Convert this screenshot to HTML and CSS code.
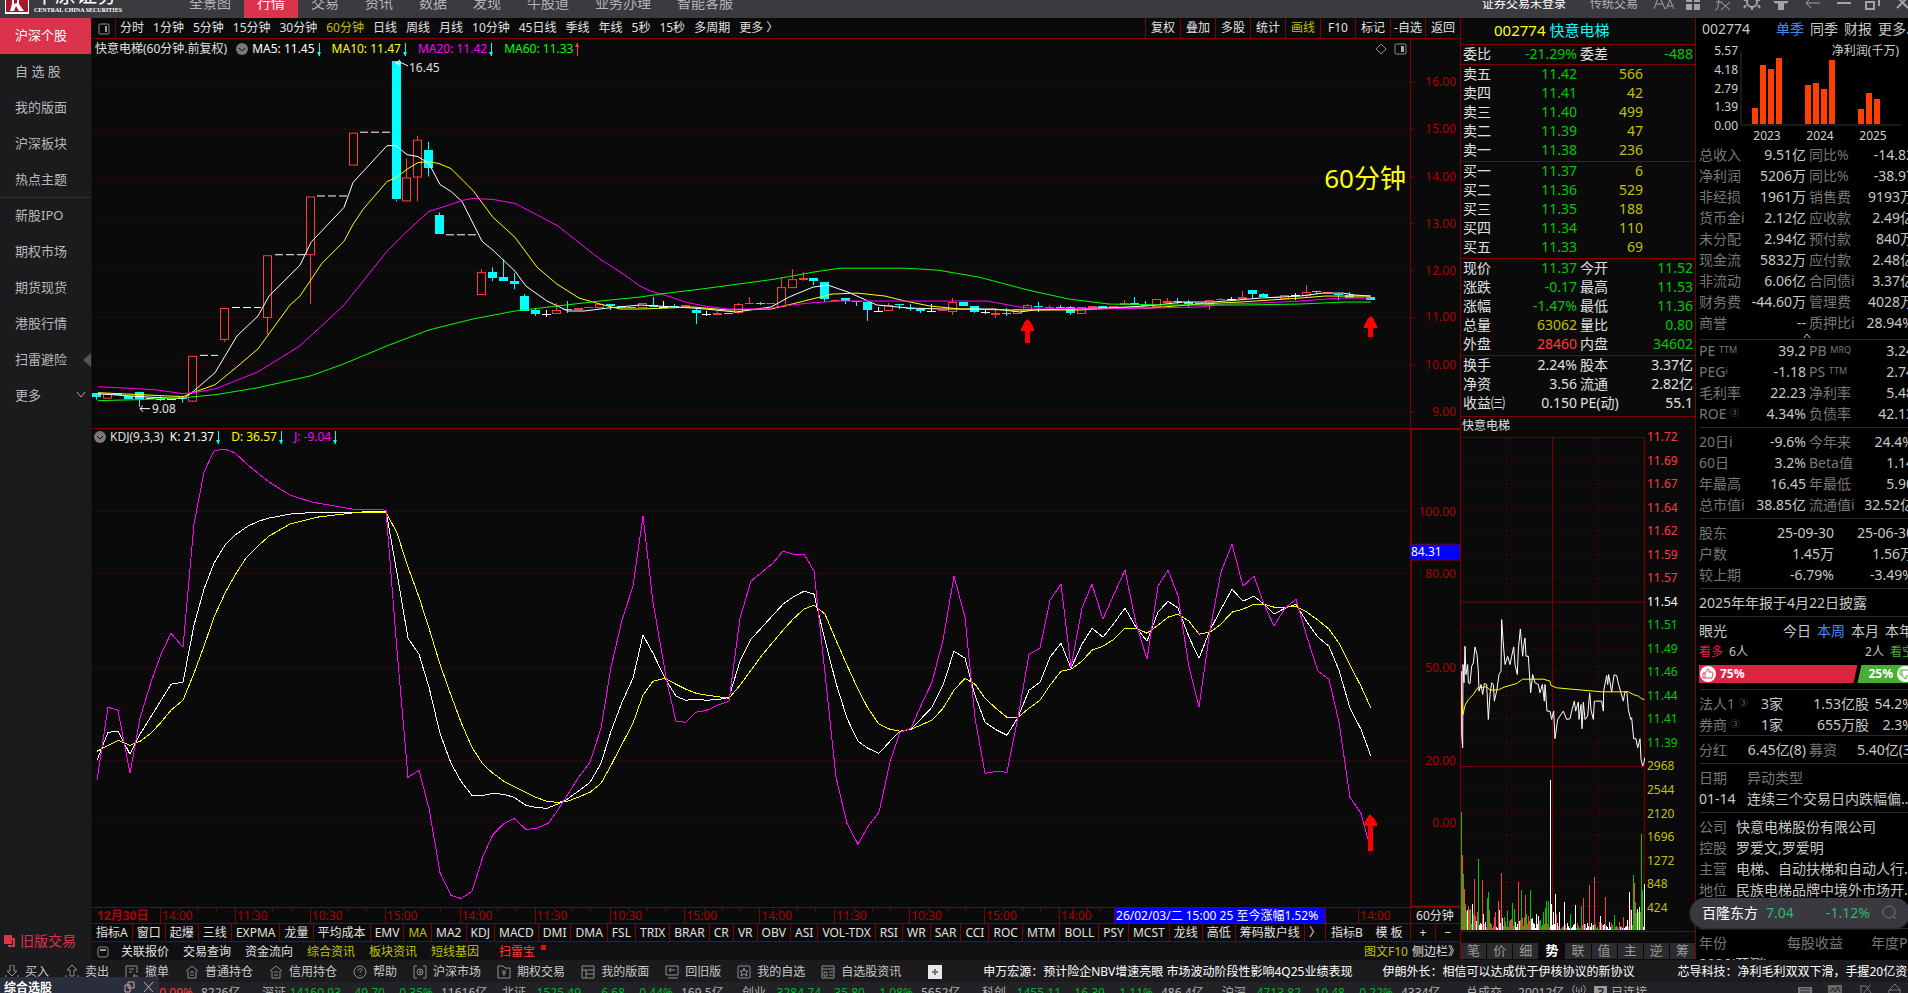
FILE: index.html
```html
<!DOCTYPE html>
<html lang="zh-CN">
<head>
  <meta charset="UTF-8">
  <meta name="viewport" content="width=device-width, initial-scale=1.0">
  <title>快意电梯 002774</title>
  <link rel="stylesheet" href="styles.css">
</head>
<body>
  <header class="topbar">
    <div class="logo">
      <svg width="24" height="14" viewBox="0 0 24 14"><rect width="24" height="14" fill="#fff"/><rect x="1" width="22" height="12" fill="#a5182c"/><path d="M7 0v4l-2 7h4l2-5 3 5h5l-5-7V0h-2v3L9 4V0z" fill="#fff"/></svg>
      <div class="logo-text">
        <b>中原证券</b>
        <small>CENTRAL CHINA SECURITIES</small>
      </div>
    </div>
    <nav class="topnav">
      <button>全景图</button>
      <button class="active">行情</button>
      <button>交易</button>
      <button>资讯</button>
      <button>数据</button>
      <button>发现</button>
      <button>牛股道</button>
      <button>业务办理</button>
      <button>智能客服</button>
    </nav>
    <div class="account">
      <button class="login">证券交易未登录</button>
      <button>传统交易</button>
      <svg class="window-icons" width="254" height="14" viewBox="0 0 254 14" fill="none" stroke="#a3a3a8" stroke-width="2">
        <path d="M0 9L5-5l6 14M2 4h7M12 9l4-9 4 9M13 6h5" stroke-width="1"/>
        <path d="M32 0h6v2h-6zM40 0h6v2h-6zM32 4h6v6h-6zM40 4h6v6h-6z" fill="#a3a3a8" stroke="none"/>
        <path d="M61 10c3 0 3-4 4-10M62 2h6M67 2l9 8M76 2l-9 8" stroke-width="1"/>
        <circle cx="98" cy="2" r="5"/><path d="M98 7v3M92 5l-2 3M104 5l2 3M90 0h3M103 0h3"/>
        <path d="M119 1h16l-3 3-2-1v7h-6V3l-2 1z" fill="#a3a3a8" stroke="none"/>
        <path d="M166 3h-14M157-2l-5 5 5 5" stroke-width="1"/>
        <path d="M183 3h14"/>
        <path d="M217-2h8v8M212 2h8v7h-8z"/>
        <path d="M243 8l11-11M254 8L243-3"/>
      </svg>
    </div>
  </header>

  <main>
    <aside class="sidebar">
      <button class="active">沪深个股</button>
      <button>自 选 股</button>
      <button>我的版面</button>
      <button>沪深板块</button>
      <button class="group-end">热点主题</button>
      <button>新股IPO</button>
      <button>期权市场</button>
      <button>期货现货</button>
      <button>港股行情</button>
      <button class="fold">扫雷避险</button>
      <button class="more">更多 <svg width="10" height="6" viewBox="0 0 10 6"><path d="M1 0l4 5 4-5" fill="none" stroke="#aaa"/></svg></button>
      <button class="old-trade"><svg width="11" height="12" viewBox="0 0 11 12"><path d="M0 0h8v9H0z" fill="#dc334c"/><path d="M5 4h5v7H4" fill="none" stroke="#dc334c" stroke-width="2"/></svg>旧版交易</button>
    </aside>

    <section class="workspace">
      <div class="periods">
        <button class="layout-btn"><svg width="12" height="12" viewBox="0 0 12 12"><rect x="1" y="1" width="10" height="10" rx="1" fill="none" stroke="#888"/><path d="M7 3h2v6H7z" fill="#999"/></svg></button>
        <div class="period-list">
          <button>分时</button><button>1分钟</button><button>5分钟</button><button>15分钟</button><button>30分钟</button><button class="on">60分钟</button><button>日线</button><button>周线</button><button>月线</button><button>10分钟</button><button>45日线</button><button>季线</button><button>年线</button><button>5秒</button><button>15秒</button><button>多周期</button><button>更多 〉</button>
        </div>
        <div class="tools">
          <button>复权</button><button>叠加</button><button>多股</button><button>统计</button><button class="on">画线</button><button>F10</button><button>标记</button><button>-自选</button><button>返回</button>
        </div>
      </div>

      <div class="panel price-panel">
        <div class="plot">
          <div class="legend">
            <span>快意电梯(60分钟.前复权)</span>
            <svg class="dot" width="12" height="12" viewBox="0 0 12 12"><circle cx="6" cy="6" r="6" fill="#777"/><path d="M3 5l3 3 3-3" fill="none" stroke="#111"/></svg>
            <span class="white">MA5: 11.45<i class="down"></i></span>
            <span class="yellow">MA10: 11.47<i class="down"></i></span>
            <span class="magenta">MA20: 11.42<i class="down"></i></span>
            <span class="green">MA60: 11.33<i class="up"></i></span>
            <svg class="legend-tools" width="32" height="12" viewBox="0 0 32 12" fill="none" stroke="#888"><path d="M6 1l5 5-5 5-5-5z"/><rect x="20" y="1" width="11" height="10" rx="1"/><path d="M26 3h3v6h-3z" fill="#aaa" stroke="none"/></svg>
          </div>
          <svg id="priceChart" class="chart" viewBox="92 59 1318 370" preserveAspectRatio="none"></svg>
          <div class="note">60分钟</div>
        </div>
        <svg id="priceAxis" class="axis" viewBox="0 39 50 390" preserveAspectRatio="none"></svg>
      </div>

      <div class="panel kdj-panel">
        <div class="plot">
          <div class="legend">
            <svg class="dot" width="12" height="12" viewBox="0 0 12 12"><circle cx="6" cy="6" r="6" fill="#777"/><path d="M3 5l3 3 3-3" fill="none" stroke="#111"/></svg>
            <span>KDJ(9,3,3)</span>
            <span class="white">K: 21.37<i class="down"></i></span>
            <span class="yellow">D: 36.57<i class="down"></i></span>
            <span class="magenta">J: -9.04<i class="down"></i></span>
          </div>
          <svg id="kdjChart" class="chart" viewBox="92 447 1318 460" preserveAspectRatio="none"></svg>
        </div>
        <svg id="kdjAxis" class="axis" viewBox="0 429 50 478" preserveAspectRatio="none"></svg>
      </div>

      <div class="timeline">
        <span class="date">12月30日</span>
        <span>14:00</span><span>11:30</span><span>10:30</span><span>15:00</span><span>14:00</span><span>11:30</span><span>10:30</span><span>15:00</span><span>14:00</span><span>11:30</span><span>10:30</span><span>15:00</span><span>14:00</span>
        <span class="cursor-info">26/02/03/二 15:00 25 至今涨幅1.52%</span>
        <span class="tail">14:00</span>
        <span class="period-name">60分钟</span>
      </div>

      <div class="indicators">
        <div class="indicator-list">
          <button>指标A</button><button>窗口</button><button>起爆</button><button>三线</button><button>EXPMA</button><button>龙量</button><button>平均成本</button><button>EMV</button><button class="on">MA</button><button>MA2</button><button>KDJ</button><button>MACD</button><button>DMI</button><button>DMA</button><button>FSL</button><button>TRIX</button><button>BRAR</button><button>CR</button><button>VR</button><button>OBV</button><button>ASI</button><button>VOL-TDX</button><button>RSI</button><button>WR</button><button>SAR</button><button>CCI</button><button>ROC</button><button>MTM</button><button>BOLL</button><button>PSY</button><button>MCST</button><button>龙线</button><button>高低</button><button>筹码散户线</button><button>〉</button>
        </div>
        <button class="wide">指标B</button><button class="wide">模 板</button><button class="zoom">+</button><button class="zoom">−</button>
      </div>

      <div class="links">
        <svg width="12" height="12" viewBox="0 0 12 12"><rect x="1" y="1" width="10" height="10" rx="2" fill="none" stroke="#888"/><path d="M3 3h6v2H3z" fill="#999"/></svg>
        <a href="#">关联报价</a><a href="#">交易查询</a><a href="#">资金流向</a>
        <a href="#" class="olive">综合资讯</a><a href="#" class="olive">板块资讯</a><a href="#" class="olive">短线基因</a>
        <a href="#" class="alert">扫雷宝</a>
        <a href="#" class="olive right">图文F10</a><a href="#" class="side-toggle">侧边栏》</a>
      </div>
    </section>

    <section class="quote">
      <h2><span class="yellow">002774</span> <span class="cyan">快意电梯</span></h2>
      <table>
        <tr><th>委比</th><td class="g">-21.29%</td><th>委差</th><td class="g">-488</td></tr>
      </table>
      <table class="book">
        <tr><th>卖五</th><td class="g">11.42</td><td class="o">566</td><td></td></tr>
        <tr><th>卖四</th><td class="g">11.41</td><td class="o">42</td><td></td></tr>
        <tr><th>卖三</th><td class="g">11.40</td><td class="o">499</td><td></td></tr>
        <tr><th>卖二</th><td class="g">11.39</td><td class="o">47</td><td></td></tr>
        <tr><th>卖一</th><td class="g">11.38</td><td class="o">236</td><td></td></tr>
      </table>
      <table class="book">
        <tr><th>买一</th><td class="g">11.37</td><td class="o">6</td><td></td></tr>
        <tr><th>买二</th><td class="g">11.36</td><td class="o">529</td><td></td></tr>
        <tr><th>买三</th><td class="g">11.35</td><td class="o">188</td><td></td></tr>
        <tr><th>买四</th><td class="g">11.34</td><td class="o">110</td><td></td></tr>
        <tr><th>买五</th><td class="g">11.33</td><td class="o">69</td><td></td></tr>
      </table>
      <table>
        <tr><th>现价</th><td class="g">11.37</td><th>今开</th><td class="g">11.52</td></tr>
        <tr><th>涨跌</th><td class="g">-0.17</td><th>最高</th><td class="g">11.53</td></tr>
        <tr><th>涨幅</th><td class="g">-1.47%</td><th>最低</th><td class="g">11.36</td></tr>
        <tr><th>总量</th><td class="o">63062</td><th>量比</th><td class="g">0.80</td></tr>
        <tr><th>外盘</th><td class="r">28460</td><th>内盘</th><td class="g">34602</td></tr>
      </table>
      <table class="basics">
        <tr><th>换手</th><td>2.24%</td><th>股本</th><td>3.37亿</td></tr>
        <tr><th>净资</th><td>3.56</td><th>流通</th><td>2.82亿</td></tr>
        <tr><th>收益㈢</th><td>0.150</td><th>PE(动)</th><td>55.1</td></tr>
      </table>
      <h3>快意电梯</h3>
      <div class="intraday">
        <svg id="intraday" class="chart" viewBox="0 0 552 1485" preserveAspectRatio="none"></svg>
        <ol class="scale">
          <li class="r">11.72</li><li class="r">11.69</li><li class="r">11.67</li><li class="r">11.64</li><li class="r">11.62</li><li class="r">11.59</li><li class="r">11.57</li><li class="w">11.54</li><li class="g">11.51</li><li class="g">11.49</li><li class="g">11.46</li><li class="g">11.44</li><li class="g">11.41</li><li class="g">11.39</li><li class="o">2968</li><li class="o">2544</li><li class="o">2120</li><li class="o">1696</li><li class="o">1272</li><li class="o">848</li><li class="o">424</li>
        </ol>
      </div>
      <div class="quote-tabs">
        <button>笔</button><button>价</button><button>细</button><button class="on">势</button><button>联</button><button>值</button><button>主</button><button>逆</button><button>筹</button>
      </div>
    </section>

    <section class="info">
      <div class="info-body">
        <div class="info-head"><span>002774</span><a href="#" class="blue">单季</a><a href="#">同季</a><a href="#">财报</a><a href="#">更多..</a></div>
        <svg class="profit" width="216" height="104" viewBox="1699 40 216 104">
          <path d="M1741 51v74h160" fill="none" stroke="#333"/>
          <path fill="#ff4000" d="M1752 108h6v16h-6zM1760 65h6v59h-6zM1768 69h6v55h-6zM1776 58h6v66h-6zM1805 85h6v39h-6zM1813 83h6v41h-6zM1821 89h6v35h-6zM1829 60h6v64h-6zM1858 109h6v15h-6zM1866 93h6v31h-6zM1874 99h6v25h-6z"/>
          <g text-anchor="end"><text x="1738" y="55">5.57</text><text x="1738" y="74">4.18</text><text x="1738" y="93">2.79</text><text x="1738" y="111">1.39</text><text x="1738" y="130">0.00</text><text x="1899" y="55">净利润(千万)</text></g>
          <g text-anchor="middle"><text x="1767" y="140">2023</text><text x="1820" y="140">2024</text><text x="1873" y="140">2025</text></g>
        </svg>
        <table class="first">
          <tr><th>总收入</th><td>9.51亿</td><th>同比%</th><td>-14.82</td></tr>
          <tr><th>净利润</th><td>5206万</td><th>同比%</th><td>-38.97</td></tr>
          <tr><th>非经损</th><td>1961万</td><th>销售费</th><td>9193万</td></tr>
          <tr><th>货币金i</th><td>2.12亿</td><th>应收款</th><td>2.49亿</td></tr>
          <tr><th>未分配</th><td>2.94亿</td><th>预付款</th><td>840万</td></tr>
          <tr><th>现金流</th><td>5832万</td><th>应付款</th><td>2.48亿</td></tr>
          <tr><th>非流动</th><td>6.06亿</td><th>合同债i</th><td>3.37亿</td></tr>
          <tr><th>财务费</th><td>-44.60万</td><th>管理费</th><td>4028万</td></tr>
          <tr><th>商誉</th><td>--</td><th>质押比i</th><td>28.94%</td></tr>
        </table>
        <div class="fold-up"><svg width="8" height="6" viewBox="0 0 8 6"><path d="M1 5l3-4 3 4" fill="none" stroke="#ccc"/></svg></div>
        <table class="tight">
          <tr><th>PE <sup>TTM</sup></th><td>39.2</td><th>PB <sup>MRQ</sup></th><td>3.24</td></tr>
          <tr><th>PEG<sup>i</sup></th><td>-1.18</td><th>PS <sup>TTM</sup></th><td>2.74</td></tr>
          <tr><th>毛利率</th><td>22.23</td><th>净利率</th><td>5.48</td></tr>
          <tr><th>ROE <sup>③</sup></th><td>4.34%</td><th>负债率</th><td>42.13</td></tr>
        </table>
        <table>
          <tr><th>20日i</th><td>-9.6%</td><th>今年来</th><td>24.4%</td></tr>
          <tr><th>60日</th><td>3.2%</td><th>Beta值</th><td>1.14</td></tr>
          <tr><th>年最高</th><td>16.45</td><th>年最低</th><td>5.90</td></tr>
          <tr><th>总市值i</th><td>38.85亿</td><th>流通值i</th><td>32.52亿</td></tr>
        </table>
        <table class="holders">
          <tr><th>股东</th><td>25-09-30</td><td>25-06-30</td></tr>
          <tr><th>户数</th><td>1.45万</td><td>1.56万</td></tr>
          <tr><th>较上期</th><td>-6.79%</td><td>-3.49%</td></tr>
        </table>
        <p>2025年年报于4月22日披露</p>
        <div class="votes">
          <div class="vote-head"><span>眼光</span><a href="#">今日</a><a href="#" class="blue">本周</a><a href="#">本月</a><a href="#">本年</a></div>
          <div class="vote-count"><b class="bull">看多</b><span>6人</span><span class="push">2人</span><b class="bear">看空</b></div>
          <div class="vote-bar">
            <div class="bull-part"><svg width="18" height="18" viewBox="0 0 18 18"><circle cx="9" cy="9" r="8" fill="#fff"/><path d="M4 8h2v5H4zM6 8l3-4c2 0 1 2 1 3h3c1 0 1 1 0 6H6" fill="none" stroke="#e0475a"/></svg>75%</div>
            <div class="bear-part">25%<svg width="18" height="18" viewBox="0 0 18 18"><circle cx="9" cy="9" r="8" fill="#fff"/><path d="M4 10h2V5H4zM6 10l3 4c2 0 1-2 1-3h3c1 0 1-1 0-6H6" fill="none" stroke="#4aae36"/></svg></div>
          </div>
        </div>
        <table class="funds">
          <tr><th>法人1 <sup>③</sup></th><td>3家</td><td>1.53亿股</td><td>54.2%</td></tr>
          <tr><th>券商 <sup>③</sup></th><td>1家</td><td>655万股</td><td>2.3%</td></tr>
        </table>
        <table>
          <tr><th>分红</th><td>6.45亿(8)</td><th>募资</th><td>5.40亿(3)</td></tr>
        </table>
        <table class="left events">
          <tr><th>日期</th><th>异动类型</th></tr>
          <tr><td>01-14</td><td>连续三个交易日内跌幅偏...</td></tr>
        </table>
        <table class="left company">
          <tr><th>公司</th><td>快意电梯股份有限公司</td></tr>
          <tr><th>控股</th><td>罗爱文,罗爱明</td></tr>
          <tr><th>主营</th><td>电梯、自动扶梯和自动人行...</td></tr>
          <tr><th>地位</th><td>民族电梯品牌中境外市场开...</td></tr>
        </table>
        <table class="forecast">
          <tr><th>年份</th><th>每股收益</th><th>年度PE</th></tr>
          <tr><td>2026(预测)</td><td></td><td></td></tr>
        </table>
      </div>
    </section>

    <div class="float-quote">
      <span>百隆东方</span><span class="fall">7.04</span><span class="fall pct">-1.12%</span>
      <svg width="16" height="16" viewBox="0 0 16 16" fill="none" stroke="#777"><circle cx="7" cy="7" r="6"/><path d="M11 11l3 3"/></svg>
    </div>
  </main>

  <div class="shortcuts">
    <button><svg viewBox="0 0 14 14"><path d="M5 0v6H2l5 5 5-5H9V0zM1 10v3h3M13 10v3h-3"/></svg>买入</button>
    <button><svg viewBox="0 0 14 14"><path d="M5 11V5H2l5-5 5 5H9v6zM1 10v3h3M13 10v3h-3"/></svg>卖出</button>
    <button><svg viewBox="0 0 14 14"><path d="M7 13H1V1h11v7M4 4h5M4 7h3M13 11H8M10 9l-2 2 2 2"/></svg>撤单</button>
    <button><svg viewBox="0 0 14 14"><path d="M1 6l6-5 6 5M3 6v7h8V6M5 7h4M5 10h4"/></svg>普通持仓</button>
    <button><svg viewBox="0 0 14 14"><path d="M1 6l6-5 6 5M3 6v7h8V6M5 7h4M5 10h4"/></svg>信用持仓</button>
    <button><svg viewBox="0 0 14 14"><circle cx="7" cy="7" r="6"/><path d="M5 6c0-3 4-3 4-1 0 1-2 1-2 3M7 10v1"/></svg>帮助</button>
    <button><svg viewBox="0 0 14 14"><path d="M4 1H1v12h3M10 1h3v12h-3"/><circle cx="7" cy="7" r="3"/><path d="M6 6h2v2H6"/></svg>沪深市场</button>
    <button><svg viewBox="0 0 14 14"><path d="M1 1h5l2 2h5v10H1zM5 5l2 2 2-2M7 7v4M5 8h4"/></svg>期权交易</button>
    <button><svg viewBox="0 0 14 14"><path d="M1 1h12v12H1zM1 5h12M5 5v8M5 9h8"/></svg>我的版面</button>
    <button><svg viewBox="0 0 14 14"><path d="M1 1h12v9H1zM3 13h10M10 5H4M6 3L4 5l2 2"/></svg>回旧版</button>
    <button><svg viewBox="0 0 14 14"><rect x="1" y="1" width="12" height="12" rx="1"/><path d="M7 3l1 3h3L9 8l1 3-3-2-3 2 1-3-2-2h3z"/></svg>我的自选</button>
    <button><svg viewBox="0 0 14 14"><path d="M1 1h12v12H1zM1 4h12M3 7h3v4H3zM8 7h4M8 10h4"/></svg>自选股资讯</button>
    <button class="add"><svg viewBox="0 0 14 14"><path d="M0 0h14v14H0z" fill="#e8e8e8" stroke="none"/><path d="M7 4v6M4 7h6" stroke="#777" stroke-width="2"/></svg></button>
    <div class="news">
      <a href="#">申万宏源：预计险企NBV增速亮眼 市场波动阶段性影响4Q25业绩表现</a>
      <a href="#">伊朗外长：相信可以达成优于伊核协议的新协议</a>
      <a href="#">芯导科技：净利毛利双双下滑，手握20亿资金</a>
    </div>
  </div>

  <footer class="status">
    <div class="index"><span>上证</span><b>4134.51</b><b class="r">3.70</b><b class="r">0.09%</b><span>8226亿</span></div>
    <div class="index"><span>深证</span><b>14160.93</b><b>49.70</b><b>0.35%</b><span>11616亿</span></div>
    <div class="index"><span>北证</span><b>1525.49</b><b>6.68</b><b>0.44%</b><span>169.5亿</span></div>
    <div class="index"><span>创业</span><b>3284.74</b><b>35.80</b><b>1.08%</b><span>5652亿</span></div>
    <div class="index"><span>科创</span><b>1455.11</b><b>16.39</b><b>1.11%</b><span>486.4亿</span></div>
    <div class="index"><span>沪深</span><b>4713.82</b><b>10.48</b><b>0.22%</b><span>4334亿</span></div>
    <div class="total"><span>总成交</span><span>20012亿</span>
      <svg width="14" height="10" viewBox="0 0 14 10" fill="none" stroke="#aaa"><path d="M3 0c-3 3-3 6 0 9M11 0c3 3 3 6 0 9M5 2c-1 2-1 4 0 5M9 2c1 2 1 4 0 5M7 4v6"/></svg>
      <em>3</em><span>已连接</span></div>
    <svg class="tray" width="104" height="10" viewBox="0 0 104 10" fill="none" stroke="#777"><path d="M0 3h14v7H0z" fill="#777" stroke="none"/><path d="M2 5h10M2 8h10" stroke="#222"/><path d="M30 1h14v9H30z" fill="#666" stroke="none"/><path d="M32 8l3-4 2 4 3-5 2 5" stroke="#222"/><path d="M62 2h6l5 7M72 1l-7 9M63 2v8"/><path d="M97 0l5 6v4M97 0l-6 6v4M91 6h12"/></svg>
    <div class="dock"><span>综合选股</span>
      <svg width="30" height="12" viewBox="0 0 30 12" fill="none" stroke="#d0a8a8"><path d="M4 1h6v6H4zM1 4h5v7H1zM20 1l9 10M29 1l-9 10"/></svg></div>
  </footer>

  <script src="charts.js"></script>
</body>
</html>
```
FILE: styles.css
```css
* {
  box-sizing: border-box;
}
body {
  margin: 0;
  height: 100vh;
  overflow: hidden;
  display: flex;
  flex-direction: column;
  background: #0a0a0a;
  color: #e0e0e0;
  font: 12px/18px "Noto Sans", "Noto Sans CJK SC", sans-serif;
  white-space: nowrap;
}
button {
  border: 0;
  padding: 0;
  background: none;
  color: inherit;
  font: inherit;
  white-space: nowrap;
  cursor: pointer;
}
a {
  color: inherit;
  text-decoration: none;
}
table {
  width: 100%;
  border-collapse: collapse;
  table-layout: fixed;
}
th, td {
  padding: 0;
  font-weight: normal;
  text-align: right;
}
th {
  text-align: left;
}
svg {
  flex: none;
}
.white, .w { color: #fff; }
.yellow { color: #ffff00; }
.magenta { color: #ff00ff; }
.green { color: #00ff00; }
.cyan { color: #00ffff; }
.blue { color: #3c8cff; }
.g { color: #00c800; }
.r { color: #ff3c3c; }
.o, .on, .olive { color: #c0c000; }

/* top bar */
.topbar {
  display: flex;
  flex: none;
  height: 18px;
  overflow: hidden;
  background: #3b3a3f;
  font-size: 14px;
  line-height: 6px;
  color: #b4b4b8;
}
.logo {
  display: flex;
  width: 176px;
  padding-left: 5px;
}
.logo-text {
  padding-left: 5px;
  color: #fff;
}
.logo-text b {
  display: block;
  height: 12px;
  margin-top: -6px;
  line-height: 0;
  font-size: 21px;
  font-weight: normal;
}
.logo-text small {
  display: block;
  font: bold 6px/8px "Liberation Serif", serif;
}
.topnav {
  display: flex;
}
.topnav button {
  padding: 0 13px 12px;
}
.topnav .active {
  background: #dc334c;
  color: #fff;
}
.account {
  display: flex;
  gap: 24px;
  margin-left: auto;
  font-size: 12px;
}
.account button {
  padding-bottom: 11px;
}
.account .login {
  color: #fff;
}
.window-icons {
  margin-left: -8px;
}

main {
  position: relative;
  display: flex;
  flex: 1;
  min-height: 0;
}

/* left menu */
.sidebar {
  display: flex;
  flex: 0 0 92px;
  flex-direction: column;
  background: #1b1b1e;
  border-right: 1px solid #141416;
  font-size: 13px;
  color: #b8b8b8;
}
.sidebar button {
  height: 36px;
  padding: 0 0 2px 15px;
  text-align: left;
}
.sidebar .active {
  background: #dc334c;
  color: #fff;
}
.sidebar .group-end {
  border-bottom: 1px solid #333336;
}
.sidebar .fold {
  position: relative;
}
.sidebar .fold::after {
  content: "";
  position: absolute;
  right: 0;
  top: 11px;
  border: 7px solid transparent;
  border-left: 0;
  border-right: 8px solid #55555a;
}
.sidebar .more {
  display: flex;
  align-items: center;
  justify-content: space-between;
  padding-right: 5px;
}
.sidebar .old-trade {
  display: flex;
  align-items: center;
  gap: 5px;
  margin-top: auto;
  padding-left: 4px;
  font-size: 14px;
  color: #dc334c;
}

/* chart workspace */
.workspace {
  display: flex;
  flex: 1;
  flex-direction: column;
  min-width: 0;
}
.periods {
  display: flex;
  flex: none;
  height: 21px;
  border-bottom: 1px solid #800000;
}
.layout-btn {
  width: 24px;
  border-right: 1px solid #800000;
}
.layout-btn svg {
  vertical-align: middle;
}
.period-list {
  display: flex;
  gap: 9px;
  padding-left: 4px;
}
.tools {
  display: flex;
  margin-left: auto;
}
.tools button {
  width: 35px;
  border-left: 1px solid #800000;
}
.panel {
  display: flex;
  min-height: 0;
}
.price-panel {
  flex: 389;
  border-bottom: 1px solid #800000;
}
.kdj-panel {
  flex: 479;
}
.plot {
  position: relative;
  display: flex;
  flex: 1;
  flex-direction: column;
  min-width: 0;
}
.plot > svg {
  flex: 1;
  width: 100%;
  min-height: 0;
}
.chart {
  shape-rendering: crispEdges;
}
.axis {
  width: 50px;
  height: 100%;
  font-size: 12px;
}
.legend {
  display: flex;
  align-items: center;
  gap: 10px;
  height: 20px;
  padding: 0 0 1px 3px;
}
.legend .dot {
  margin: 0 -6px 0 -1px;
}
.kdj-panel .legend {
  height: 18px;
  padding-bottom: 2px;
  gap: 6px;
}
.kdj-panel .legend .dot {
  margin-right: -2px;
}
.kdj-panel .legend span + span + span {
  margin-left: 4px;
}
.legend i {
  position: relative;
  display: inline-block;
  width: 1px;
  height: 13px;
  margin: 0 2px 0 4px;
  background: #00ffff;
  vertical-align: middle;
}
.legend i::after {
  content: "";
  position: absolute;
  left: -2px;
  bottom: 0;
  border: 2px solid transparent;
  border-top: 4px solid #00ffff;
  border-bottom: 0;
}
.legend .up {
  background: #ff3c3c;
}
.legend .up::after {
  top: 0;
  bottom: auto;
  border-top: 0;
  border-bottom: 4px solid #ff3c3c;
}
.legend-tools {
  margin: 0 3px 0 auto;
}
.note {
  position: absolute;
  right: 4px;
  top: 121px;
  font-size: 26px;
  line-height: 36px;
  color: #ffff00;
}
.timeline {
  display: flex;
  flex: none;
  height: 16px;
  border-top: 1px solid #800000;
  line-height: 15px;
  color: #b00000;
}
.timeline span {
  flex: 1;
  min-width: 0;
  padding-left: 1px;
  border-left: 1px solid #800000;
  background:
    linear-gradient(#800000, #800000) 25% 0 / 1px 3px no-repeat,
    linear-gradient(#800000, #800000) 50% 0 / 1px 3px no-repeat,
    linear-gradient(#800000, #800000) 75% 0 / 1px 3px no-repeat;
}
.timeline .date {
  flex: 0 0 68px;
  padding-left: 5px;
  border-left: 0;
  background: none;
  font-weight: bold;
}
.timeline span:nth-child(14) {
  flex: 0 0 55px;
}
.timeline .cursor-info {
  flex: 0 0 211px;
  padding-left: 1px;
  overflow: hidden;
  background: #0000ff;
  color: #fff;
}
.timeline .tail {
  flex: 0 0 85px;
  padding-left: 34px;
  background: linear-gradient(#800000, #800000) 32px 0 / 1px 15px no-repeat;
}
.timeline .period-name {
  flex: 0 0 50px;
  padding-left: 5px;
  background: none;
  color: #e0e0e0;
}
.indicators {
  display: flex;
  flex: none;
  height: 19px;
  border: solid #800000;
  border-width: 1px 0;
  line-height: 17px;
}
.indicator-list {
  display: flex;
  flex: 1;
  min-width: 0;
  overflow: hidden;
}
.indicator-list button {
  flex: 1 1 auto;
  border-right: 1px solid #800000;
}
.indicators .wide {
  width: 42px;
}
.indicators .zoom {
  width: 25px;
  border-left: 1px solid #800000;
}
.links {
  display: flex;
  flex: none;
  align-items: center;
  gap: 14px;
  height: 18px;
  padding: 1px 0 0 5px;
  background: #101012;
}
.links svg {
  margin-right: -2px;
}
.links .alert {
  position: relative;
  margin-left: 6px;
  color: #ff3c3c;
}
.links .alert::after {
  content: "";
  position: absolute;
  right: -11px;
  top: 2px;
  width: 5px;
  height: 5px;
  background: #ff0000;
}
.links .right {
  margin-left: auto;
}
.links .side-toggle {
  margin-left: -10px;
}

/* quote panel */
.quote {
  display: flex;
  flex: 0 0 236px;
  flex-direction: column;
  border: solid #800000;
  border-width: 0 1px;
}
.quote h2 {
  height: 26px;
  margin: 0;
  padding-left: 33px;
  font-size: 15px;
  font-weight: normal;
  line-height: 24px;
}
.quote table {
  display: block;
  flex: none;
  padding: 0 2px 1px;
  border-top: 1px solid #800000;
  font-size: 14px;
  line-height: 17px;
}
.quote h2 + table {
  padding-bottom: 0;
}
.quote .basics {
  padding-bottom: 3px;
}
.quote th, .quote td {
  height: 19px;
  padding-bottom: 2px;
}
.quote th:nth-child(1) { width: 50px; }
.quote td:nth-child(2) { width: 64px; }
.quote th:nth-child(3) { width: 58px; padding-left: 3px; }
.quote td:nth-child(3) { width: 66px; }
.quote td:nth-child(4) { width: 58px; }
.quote .book td:nth-child(4) { width: 50px; }
.quote h3 {
  height: 21px;
  margin: 0;
  padding-left: 1px;
  border-top: 1px solid #800000;
  font-size: 12px;
  font-weight: normal;
  line-height: 18px;
}
.intraday {
  display: flex;
  flex: 1;
  min-height: 0;
  border-bottom: 1px solid #800000;
}
.intraday svg {
  width: 184px;
  height: 100%;
}
.scale {
  display: flex;
  flex: 1;
  flex-direction: column;
  margin: -9px 0 0;
  padding: 0 0 9px 2px;
  list-style: none;
}
.scale li {
  flex: 1;
  min-height: 0;
}
.quote-tabs {
  display: flex;
  gap: 1px;
  height: 28px;
  padding: 11px 0 1px;
}
.quote-tabs button {
  flex: 1;
  padding-bottom: 2px;
  background: #2b2b2d;
  font-size: 13px;
  line-height: 14px;
  color: #999;
}
.quote-tabs .on {
  background: none;
  color: #fff;
  font-weight: bold;
}

/* company panel */
.info {
  flex: 0 0 212px;
  overflow: hidden;
  background: #000;
  font-size: 14px;
  line-height: 21px;
  color: #c8c8c8;
}
.info-body {
  margin: 0 -6px 0 3px;
}
.info-head {
  display: flex;
  gap: 6px;
  height: 22px;
  padding-left: 3px;
}
.info-head span {
  width: 68px;
}
.profit {
  display: block;
  font-size: 12px;
  fill: #d0d0d0;
}
.info table {
  border-top: 4px solid transparent;
  border-bottom: 3px solid transparent;
  background: linear-gradient(#2a2a2a, #2a2a2a) 0 0 / 100% 1px no-repeat border-box;
}
.info table.first {
  border: 0;
  background: none;
}
.info table.tight {
  border-top-width: 1px;
}
.info th, .info td {
  height: 21px;
  overflow: hidden;
}
.info th {
  color: #777;
}
.info th:nth-child(1) { width: 45px; }
.info td:nth-child(2) { width: 62px; }
.info th:nth-child(3) { width: 51px; padding-left: 3px; }
.info sup {
  font-size: 9px;
  line-height: 9px;
  vertical-align: 3px;
}
.fold-up {
  height: 6px;
  text-align: center;
  line-height: 6px;
}
.fold-up svg {
  display: block;
  margin: 0 auto;
}
.info .holders td:nth-child(2) { width: 90px; }
.info p {
  margin: 0;
  padding: 3px 0;
  border-top: 1px solid #2a2a2a;
}
.votes {
  height: 73px;
  padding-top: 3px;
  border-top: 1px solid #2a2a2a;
}
.vote-head {
  display: flex;
  gap: 6px;
}
.vote-head span {
  width: 78px;
}
.vote-count {
  display: flex;
  gap: 6px;
  font-size: 12px;
}
.vote-count b {
  font-weight: normal;
}
.vote-count .push {
  margin-left: auto;
}
.bull { color: #ee2244; }
.bear { color: #4aae36; }
.vote-bar {
  display: flex;
  height: 18px;
  margin-top: 3px;
  font-size: 12px;
  font-weight: bold;
  line-height: 18px;
  color: #fff;
}
.bull-part {
  display: flex;
  gap: 3px;
  flex: 1;
  background: #dc2440;
  clip-path: polygon(0 0, 100% 0, calc(100% - 4px) 100%, 0 100%);
}
.bear-part {
  display: flex;
  gap: 3px;
  flex: 0 0 56px;
  padding-left: 11px;
  background: #4aae36;
  clip-path: polygon(4px 0, 100% 0, 100% 100%, 0 100%);
}
.info table.funds {
  border-bottom-width: 0;
}
.info .funds th { width: 62px; }
.info .funds td:nth-child(2) { width: 22px; }
.info .funds td:nth-child(3) { width: 86px; }
.info .left td {
  text-align: left;
}
.info .left.events th:nth-child(1) { width: 48px; }
.info .left.company th:nth-child(1) { width: 37px; }
.info .left.company td { width: auto; }
.info table.company {
  border-bottom-width: 28px;
}
.info .forecast th:nth-child(1) { width: 88px; }
.info .forecast th:nth-child(2) { width: 81px; }
.info .forecast td { text-align: left; }
.float-quote {
  position: absolute;
  right: -2px;
  bottom: 32px;
  display: flex;
  align-items: center;
  width: 220px;
  height: 30px;
  padding: 0 12px;
  border-radius: 15px;
  background: #3a393f;
  box-shadow: 0 1px 3px #333;
  font-size: 14px;
  color: #fff;
}
.float-quote .fall {
  margin-left: 8px;
  color: #2fb86e;
}
.float-quote .pct {
  margin-left: auto;
  margin-right: 12px;
}

/* bottom bars */
.shortcuts {
  display: flex;
  flex: none;
  align-items: center;
  gap: 16px;
  height: 22px;
  padding: 1px 0 0 5px;
  overflow: hidden;
  background: #1b1b1e;
  color: #c8c8c8;
}
.shortcuts button {
  display: flex;
  align-items: center;
  gap: 6px;
}
.shortcuts svg {
  width: 14px;
  height: 14px;
  fill: none;
  stroke: #909094;
}
.shortcuts .add {
  margin-left: 11px;
}
.news {
  display: flex;
  gap: 30px;
  margin-left: 25px;
  color: #fff;
}
.news a:last-child {
  margin-left: 13px;
}
.status {
  position: relative;
  display: flex;
  flex: none;
  height: 11px;
  padding-left: 22px;
  background: #222226;
  line-height: 21px;
  color: #b0b0b0;
}
.index {
  display: grid;
  flex: none;
  grid-template-columns: 27px 52px 44px 48px auto;
  width: 240px;
}
.index b {
  color: #00b428;
  font-weight: normal;
  text-align: right;
}
.index .r {
  color: #ff3c3c;
}
.index span:last-child {
  padding-left: 8px;
}
.total {
  display: flex;
  gap: 8px;
  margin-left: 4px;
}
.total span + span {
  margin-left: 8px;
}
.total em {
  width: 13px;
  height: 8px;
  margin-top: 4px;
  background: #999;
  color: #222;
  font-style: normal;
  font-weight: bold;
  line-height: 14px;
  text-align: center;
}
.total em + span {
  margin-left: -4px;
}
.total svg {
  margin-top: 3px;
}
.tray {
  margin: 2px 6px 0 auto;
}
.dock {
  position: absolute;
  left: 0;
  bottom: 0;
  display: flex;
  align-items: flex-start;
  justify-content: space-between;
  width: 159px;
  height: 16px;
  padding: 0 5px 0 4px;
  overflow: hidden;
  background: #2a2e3c;
  color: #fff;
  font-weight: bold;
  line-height: 22px;
}
.dock svg {
  margin-top: 4px;
}
```
FILE: charts.js
```js
const RED = '#ff3c3c';
const CYAN = '#00ffff';
const WHITE = '#ffffff';
const LINE = '#800000';

function rect(x, y, w, h, fill, stroke) {
  return `<rect x="${x}" y="${y}" width="${w}" height="${h}" fill="${fill}" ${stroke ? `stroke="${stroke}"` : ''}/>`;
}

function line(x1, y1, x2, y2, color, extra = '') {
  return `<line x1="${x1}" y1="${y1}" x2="${x2}" y2="${y2}" stroke="${color}" ${extra}/>`;
}

function polyline(points, color, width = 1) {
  return `<polyline points="${points}" fill="none" stroke="${color}" stroke-width="${width}"/>`;
}

function text(x, y, value, color, anchor = 'start') {
  return `<text x="${x}" y="${y}" fill="${color}" text-anchor="${anchor}" font-size="12">${value}</text>`;
}

function arrow(x, top, bottom) {
  return `<path d="M${x} ${top}l4 4 3 6v2h-4v${bottom - top - 12}h-5v-${bottom - top - 12}h-4v-2l3-6z" fill="#ff0000"/>`;
}

// index, type (r up, c down, w flat), body top, body bottom, high, low
const candles = [
  [0, 'c', 394, 398, 394, 401], [1, 'r', 395, 399], [2, 'c', 394, 396], [3, 'c', 397, 400], [4, 'c', 393, 400, 393, 408],
  [5, 'w', 399], [6, 'w', 400, 400, 398, 402], [7, 'w', 400], [8, 'c', 398, 400, 397, 404],
  [9, 'r', 357, 402, 357, 403], [12, 'r', 309, 340, 309, 343], [16, 'r', 256, 318, 256, 335],
  [20, 'r', 197, 255, 197, 305], [24, 'r', 133, 165], [28, 'c', 61, 200, 61, 202],
  [29, 'r', 178, 201, 159, 202], [30, 'r', 140, 177, 136, 202], [31, 'c', 150, 168, 142, 177],
  [32, 'c', 216, 235, 213, 235], [36, 'r', 273, 295, 270, 295], [37, 'c', 273, 279, 268, 282],
  [38, 'c', 278, 282, 260, 282], [39, 'c', 282, 285, 274, 290], [40, 'c', 297, 312, 295, 312],
  [41, 'c', 311, 315, 309, 317], [42, 'w', 315, 315, 311, 318], [43, 'r', 311, 314, 304, 314],
  [44, 'c', 310, 311, 302, 314], [45, 'r', 309, 311], [46, 'r', 308, 309], [47, 'r', 305, 308], [48, 'c', 305, 307, 305, 311],
  [49, 'c', 307, 309], [50, 'c', 308, 309], [51, 'r', 304, 308], [52, 'c', 306, 308, 298, 308], [53, 'w', 308, 308, 302, 308],
  [54, 'c', 307, 308, 305, 309], [55, 'r', 306, 308], [56, 'c', 311, 314, 309, 325], [57, 'w', 315, 315, 312, 317],
  [58, 'r', 314, 316, 312, 316], [59, 'c', 314, 315], [60, 'r', 305, 313, 304, 315], [61, 'r', 304, 305, 298, 305],
  [62, 'c', 304, 305, 303, 306], [63, 'r', 304, 305], [64, 'r', 288, 307, 278, 307], [65, 'r', 280, 288, 270, 288],
  [66, 'r', 279, 281, 273, 282], [67, 'c', 279, 282, 279, 286], [68, 'c', 283, 300, 283, 303], [69, 'r', 301, 302, 300, 302],
  [70, 'c', 299, 302, 299, 305], [71, 'c', 302, 303, 302, 307], [72, 'c', 303, 311, 303, 322], [73, 'w', 312, 312, 308, 313],
  [74, 'r', 306, 311, 304, 311], [75, 'c', 305, 306, 305, 310], [76, 'c', 309, 310, 305, 312], [77, 'c', 310, 312, 309, 314],
  [78, 'w', 312, 312, 305, 312], [79, 'r', 311, 312], [80, 'r', 303, 312, 299, 316], [81, 'c', 303, 307], [82, 'c', 307, 313, 307, 314],
  [83, 'w', 313, 313, 311, 315], [84, 'r', 314, 316, 311, 319], [85, 'c', 314, 315, 309, 317], [86, 'r', 310, 314],
  [87, 'r', 306, 310, 305, 310], [88, 'c', 307, 308, 303, 313], [89, 'r', 308, 309, 306, 309], [90, 'c', 308, 309, 306, 309],
  [91, 'c', 308, 314, 307, 316], [92, 'r', 308, 314], [93, 'r', 307, 309], [94, 'c', 307, 309], [95, 'r', 307, 308],
  [96, 'r', 304, 306, 301, 306], [97, 'c', 304, 306, 298, 306], [98, 'c', 306, 307, 302, 307], [99, 'r', 300, 307],
  [100, 'r', 302, 304, 299, 304], [101, 'c', 302, 303, 299, 305], [102, 'c', 303, 305, 301, 308], [103, 'c', 304, 305],
  [104, 'r', 301, 305, 301, 311], [105, 'r', 300, 301, 299, 301], [106, 'w', 300, 300, 298, 301], [107, 'r', 298, 300, 292, 300],
  [108, 'c', 291, 295, 291, 299], [109, 'c', 295, 298, 294, 298], [110, 'c', 298, 299], [111, 'r', 296, 299],
  [112, 'w', 296, 296, 294, 301], [113, 'r', 293, 296, 286, 298], [114, 'c', 292, 293, 292, 295], [115, 'r', 293, 294],
  [116, 'c', 295, 296, 295, 301], [117, 'c', 296, 299, 293, 299], [118, 'r', 298, 299], [119, 'c', 298, 301]
];

// limit-up / limit-down bars that never traded: x from, x to, y
const flats = [[200, 218, 356.5], [232, 261, 308.5], [275, 306, 255.5], [317, 347, 196.5], [360, 390, 132.5], [446, 476, 235.5]];

const ma = {
  '#ffffff': '98,395 140,398 183,400 193,393 215,374 237,337 258,317 269,297 300,266 311,243 344,208 353,183 387,146 396,146 407,155 418,157 429,164 440,185 451,192 462,202 482,242 493,251 515,272 526,287 547,302 568,312 584,312 608,309 640,306 693,309 705,310 736,313 771,308 789,298 813,288 828,286 848,293 877,306 909,309 942,310 995,310 1020,313 1034,311 1105,309 1146,307 1157,306 1183,303 1213,303 1237,301 1260,299 1280,298 1300,297 1323,294 1343,294 1355,296 1371,297',
  '#ffff00': '98,394 140,396 183,398 193,394 215,386 237,368 258,350 290,306 300,297 322,264 344,242 353,225 363,210 387,182 396,178 408,169 418,163 429,162 439,164 451,169 473,191 493,218 515,238 537,268 557,285 579,299 600,305 620,310 640,310 693,308 728,311 771,310 788,306 812,300 832,295 857,294 885,297 905,302 930,307 960,310 1010,311 1080,311 1115,309 1150,309 1200,305 1240,303 1270,301 1300,299 1325,297 1370,297',
  '#ff00ff': '98,388 118,389 155,391 183,395 200,393 216,390 258,373 300,347 344,306 387,252 408,231 429,212 451,205 462,201 473,199 493,200 515,204 557,226 600,260 622,274 640,287 651,292 671,298 685,303 705,307 728,310 766,310 783,307 809,304 840,302 987,302 1020,308 1032,309 1101,310 1200,308 1225,305 1260,304 1300,302 1340,299 1370,299',
  '#00ff00': '98,402 139,401 183,399 216,396 258,389 311,377 344,365 387,347 429,331 473,320 515,312 557,307 600,302 640,298 660,295 701,290 775,280 813,273 840,269 905,269 938,271 979,278 1028,291 1069,300 1109,305 1171,306 1240,306 1300,305 1345,303 1371,303'
};

const kdj = {
  '#ffffff': '97,760 108,732 118,731 130,754 140,734 171,684 183,682 194,625 204,589 214,563 225,545 235,535 248,526 259,521 269,518 290,514 318,512 360,512 386,511 397,573 408,638 419,654 429,687 440,733 451,763 461,781 472,795 483,795 493,793 504,794 514,797 526,805 536,807 547,808 557,804 567,799 578,791 590,782 601,763 611,731 622,702 633,678 643,635 653,653 665,678 676,696 686,700 696,699 707,700 720,699 729,697 740,661 751,639 762,627 783,604 793,597 804,591 814,594 825,640 836,683 847,718 858,741 868,748 879,753 890,741 900,731 911,729 932,707 943,685 954,651 965,658 975,695 985,722 997,730 1007,735 1018,717 1029,690 1040,682 1050,657 1061,643 1071,668 1082,644 1092,628 1103,637 1114,623 1125,608 1136,627 1147,641 1158,612 1168,601 1178,608 1189,637 1199,658 1210,630 1221,609 1232,589 1243,601 1254,596 1264,604 1274,614 1285,608 1296,604 1307,622 1318,637 1329,646 1339,670 1350,708 1361,729 1371,756',
  '#ffff00': '97,751 118,740 130,745 140,741 151,733 161,722 171,710 183,700 194,673 204,646 214,617 225,593 235,575 246,558 259,545 269,536 290,524 318,517 360,512 386,512 397,533 408,567 419,597 429,628 440,664 451,695 461,722 472,747 483,764 493,773 504,781 514,786 526,792 536,797 547,801 557,802 567,801 578,797 590,792 601,783 611,765 622,744 633,723 643,695 653,681 665,678 676,684 686,689 696,693 707,695 729,698 740,685 751,670 762,655 783,630 793,619 804,609 814,605 825,614 836,640 847,665 858,689 868,708 879,724 890,729 900,731 911,729 932,720 943,708 954,690 965,678 975,684 985,698 997,709 1007,717 1018,717 1029,708 1040,700 1050,685 1061,671 1071,669 1082,661 1092,650 1103,646 1114,639 1125,628 1136,628 1147,633 1158,625 1168,617 1178,614 1189,621 1199,634 1210,632 1221,624 1232,612 1243,609 1254,604 1264,604 1274,607 1285,607 1296,606 1307,612 1318,620 1329,629 1339,643 1350,665 1361,686 1371,708',
  '#ff00ff': '97,780 108,707 118,710 130,773 140,718 151,682 161,654 171,633 183,647 194,524 204,472 214,451 225,449 235,453 248,465 269,482 290,495 312,502 352,509 386,510 397,650 408,777 419,770 429,808 440,872 451,895 461,898 472,891 483,856 493,834 504,823 514,818 526,829 536,828 548,823 557,811 578,778 590,762 601,728 611,667 622,620 633,586 643,516 653,602 667,682 676,721 686,722 696,712 707,710 720,704 729,701 740,618 751,581 762,572 773,563 783,551 793,554 804,554 814,571 825,673 836,777 847,823 858,844 868,826 879,812 890,762 900,732 911,728 922,703 932,682 943,640 954,576 965,617 975,718 985,773 997,771 1007,772 1018,717 1029,654 1040,648 1050,600 1061,584 1071,667 1082,608 1092,584 1103,619 1114,594 1125,570 1136,623 1147,659 1158,586 1168,570 1178,596 1189,667 1199,707 1210,630 1221,572 1232,544 1243,586 1254,576 1264,604 1274,626 1285,608 1296,599 1307,637 1318,671 1329,679 1339,722 1350,797 1361,813 1371,850'
};

const priceLevels = [[16, 82.5], [15, 129.5], [14, 177.5], [13, 224.5], [12, 271.5], [11, 318.5], [10, 366.5], [9, 413.5]];
const kdjLevels = [[100, 511.5], [80, 573.5], [50, 667.5], [20, 760.5], [0, 822.5]];

function grid(levels) {
  return levels.map(([, y]) => line(93, y, 1409, y, LINE, 'stroke-dasharray="1 3"')).join('');
}

function drawCandle([i, type, top, bottom = top, high = top, low = bottom]) {
  const x = Math.round(96 + i * 10.706);
  const color = { r: RED, c: CYAN, w: WHITE }[type];
  let out = '';
  if (high < top) out += line(x + 0.5, high, x + 0.5, top, color);
  if (low > bottom) out += line(x + 0.5, bottom, x + 0.5, low, color);
  if (type === 'r' && bottom - top > 2) {
    out += rect(x - 3.5, top + 0.5, 8, bottom - top, 'none', color);
  } else {
    out += rect(x - 4, top, 9, Math.max(bottom - top, 1), color);
  }
  return out;
}

function drawPrice() {
  let out = grid(priceLevels);
  out += candles.map(drawCandle).join('');
  out += flats.map(([a, b, y]) => line(a, y, b, y, WHITE, 'stroke-dasharray="8 3"')).join('');
  for (const color in ma) out += polyline(ma[color], color);
  out += polyline('396,63 402,63 408,66', WHITE) + polyline('400,60 396,63 400,66', WHITE) + text(409, 72, '16.45', '#e0e0e0');
  out += polyline('150,410 140,410', WHITE) + polyline('143,407 140,410 143,413', WHITE) + text(152, 414, '9.08', '#e0e0e0');
  out += arrow(1027, 320, 344) + arrow(1370, 317, 338);
  document.getElementById('priceChart').innerHTML = out;

  out = line(0.5, 39, 0.5, 429, LINE);
  priceLevels.forEach(([value, y]) => {
    out += line(0, y, 5, y, LINE) + line(0, y - 23, 2, y - 23, LINE);
    out += text(46, y + 4, value.toFixed(2), '#b00000', 'end');
  });
  document.getElementById('priceAxis').innerHTML = out;
}

function drawKdj() {
  let out = grid(kdjLevels);
  for (const color in kdj) out += polyline(kdj[color], color);
  out += arrow(1370, 814, 851);
  document.getElementById('kdjChart').innerHTML = out;

  out = `<rect x="1" y="429" width="50" height="477" fill="none" stroke="${LINE}" stroke-width="2"/>`;
  kdjLevels.forEach(([value, y]) => {
    out += text(46, y + 4, value.toFixed(2), '#b00000', 'end');
  });
  out += rect(0, 544, 50, 16, '#0000ff', LINE) + text(1, 556, '84.31', WHITE);
  document.getElementById('kdjAxis').innerHTML = out;
}

const intradayPrice = '20,215 20,405 23,445 24,195 27,250 30,140 33,225 38,195 40,250 45,252 50,200 55,190 60,142 66,165 70,215 72,275 78,255 83,285 88,252 95,255 100,360 105,285 110,250 115,255 118,305 125,275 132,225 138,215 140,60 144,120 150,195 158,170 165,195 170,170 176,142 180,195 187,225 190,150 196,88 203,170 206,138 210,115 213,170 220,170 227,280 233,225 240,250 250,255 255,280 262,255 268,305 270,255 276,335 285,335 290,360 296,335 300,418 308,360 325,335 335,360 345,358 350,335 358,305 362,335 370,308 372,360 378,315 381,388 385,308 390,360 398,350 404,280 408,332 415,360 418,305 440,305 445,335 446,275 455,228 458,255 461,225 470,278 477,226 485,228 490,252 505,305 510,275 516,280 520,330 527,360 530,355 536,418 543,418 548,445 555,418 558,480 563,500 567,490 569,475';
const intradayAvg = '20,300 24,345 30,318 40,300 55,285 68,265 95,262 105,272 130,271 150,262 185,252 203,239 265,239 285,245 288,258 305,265 360,270 440,277 520,277 535,285 550,290 560,298 568,300';

// minute slot: [height, colour]
const volumePeaks = {
  0: [118, 'g'], 1: [75, 'r'], 2: [56, 'g'], 3: [41, 'r'], 4: [26, 'g'], 5: [19, 'g'], 6: [20, 'w'], 7: [24, 'r'], 8: [20, 'r'], 9: [21, 'g'],
  11: [26, 'w'], 13: [51, 'r'], 16: [18, 'r'], 17: [71, 'g'], 21: [50, 'r'], 26: [32, 'g'], 27: [38, 'g'], 28: [20, 'r'], 34: [18, 'r'],
  37: [29, 'r'], 38: [20, 'w'], 40: [57, 'r'], 46: [19, 'g'], 51: [27, 'g'], 53: [21, 'g'], 57: [48, 'r'], 60: [40, 'g'], 64: [35, 'r'],
  69: [40, 'g'], 82: [18, 'g'], 84: [22, 'g'], 85: [29, 'g'], 87: [29, 'g'], 89: [150, 'w'], 90: [26, 'w'], 92: [18, 'w'], 94: [36, 'w'], 98: [18, 'w'],
  103: [28, 'w'], 109: [16, 'g'], 114: [25, 'w'], 120: [24, 'g'], 122: [32, 'r'], 128: [45, 'r'], 133: [53, 'r'], 139: [14, 'w'],
  144: [33, 'r'], 153: [15, 'g'], 162: [13, 'r'], 168: [38, 'w'], 170: [20, 'w'], 172: [55, 'g'], 173: [47, 'r'], 174: [28, 'g'], 175: [17, 'g'],
  176: [21, 'w'], 177: [18, 'g'], 178: [23, 'w'], 179: [18, 'r'], 180: [96, 'g'], 181: [40, 'g'], 183: [46, 'w']
};
const volumeBase = [6, 11, 3, 14, 8, 2, 12, 5, 9, 3, 16, 4, 7, 10, 2, 6, 13];

function drawIntraday() {
  const colors = { r: RED, g: '#00c800', w: WHITE };
  let out = '';
  [73, 142, 214, 283, 355, 424, 565, 637, 706, 778, 847, 919, 1057, 1129, 1198, 1270, 1339, 1411].forEach(y => {
    out += line(6, y, 550, y, LINE, 'stroke-width="3" stroke-dasharray="3 9"');
  });
  [137, 412].forEach(x => out += line(x, 6, x, 1485, LINE, 'stroke-width="3" stroke-dasharray="3 9"'));
  [1, 496, 991].forEach(y => out += line(0, y, 552, y, LINE, 'stroke-width="3"'));
  [275, 550].forEach(x => out += line(x, 0, x, 1485, LINE, 'stroke-width="3"'));
  for (let i = 0; i < 184; i++) {
    const quiet = i > 95 && i < 166 ? 0.5 : i > 165 ? 1.6 : 1;
    const [h, c] = volumePeaks[i] || [Math.max(1, Math.round(volumeBase[(i * 5 + (i >> 3)) % 17] * quiet)), 'wrgwwrgrw'[(i * 4 + (i >> 2)) % 9]];
    out += rect(i * 3, 1482 - h * 3, 3, h * 3, colors[c]);
  }
  out += `<g transform="translate(-18 489)">${polyline(intradayPrice, WHITE, 3)}${polyline(intradayAvg, '#ffff00', 3)}</g>`;
  document.getElementById('intraday').innerHTML = out;
}

drawPrice();
drawKdj();
drawIntraday();
```
